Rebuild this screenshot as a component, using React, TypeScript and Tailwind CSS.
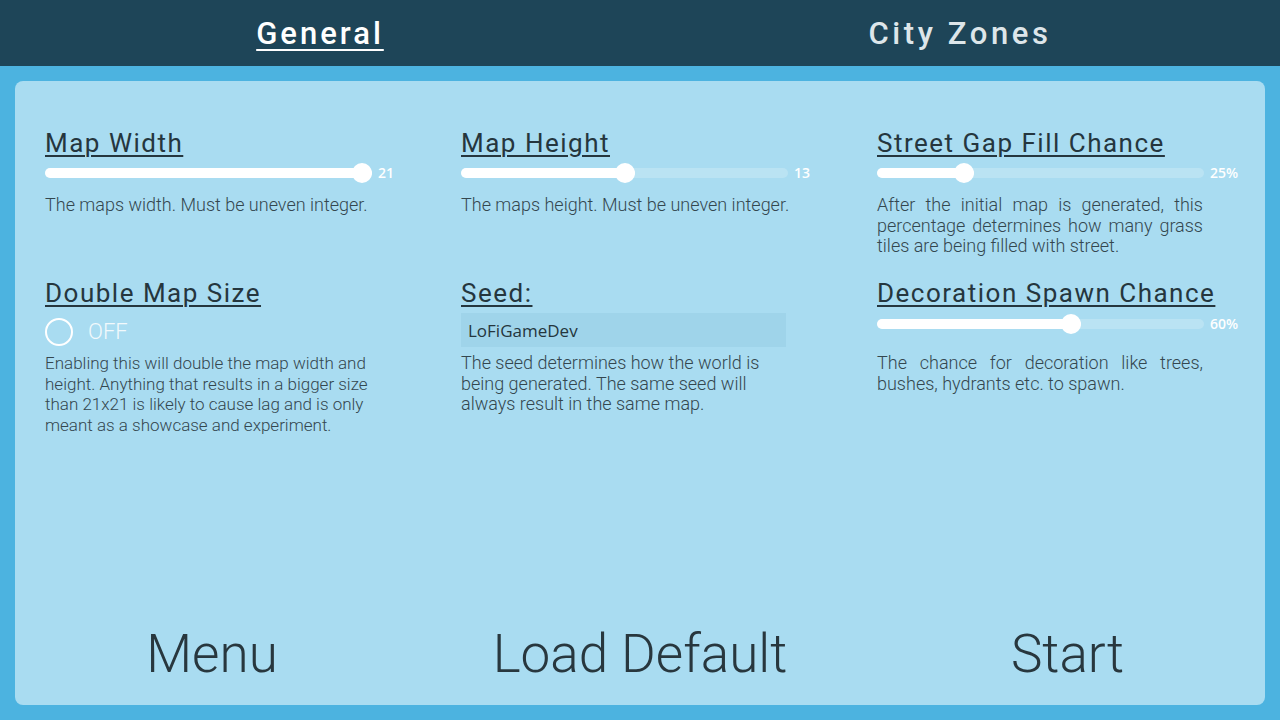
import { useState } from "react";

interface SliderProps {
   value: number;
   min: number;
   max: number;
   label: string;
}

function Slider ({ value, min, max, label }: SliderProps) {
   const pct = (value - min) / (max - min);
   return (
      <div className="flex items-center h-5 gap-[6px]">
         <div className="relative w-[327px] h-5">
            <div className="absolute left-0 right-0 top-[5px] h-[10px] rounded-full bg-white/20" />
            <div
               className="absolute left-0 top-[5px] h-[10px] rounded-full bg-white"
               style={{ width: `calc(${pct} * (100% - 20px) + 20px)` }}
            />
            <div
               className="absolute top-0 w-5 h-5 rounded-full bg-white"
               style={{ left: `calc(${pct} * (100% - 20px))` }}
            />
         </div>
         <span className="font-['Open_Sans',sans-serif] font-semibold text-[14px] text-white leading-none">{label}</span>
      </div>
   );
}

function Heading ({ children }: { children: React.ReactNode }) {
   return (
      <h2 className="text-[26px] leading-[30px] tracking-[1.5px] underline underline-offset-[3px] decoration-[1.5px] text-[#25363e]">
         {children}
      </h2>
   );
}

function Desc ({ children, justify = false, small = false }: { children: React.ReactNode; justify?: boolean; small?: boolean }) {
   return (
      <p className={`font-light leading-[20.5px] text-[#34474f] ${small ? "text-[17px]" : "text-[18px]"} ${justify ? "w-[326px] text-justify" : "w-[334px]"}`}>
         {children}
      </p>
   );
}

export default function App () {
   const [doubleSize, setDoubleSize] = useState(false);
   const [seed, setSeed] = useState("LoFiGameDev");

   return (
      <div className="w-[1280px] h-[720px] bg-[#4cb3e0] flex flex-col font-[Roboto,sans-serif] overflow-hidden">
         {/* Tabs */}
         <div className="h-[66px] bg-[#1e4558] grid grid-cols-2 items-center text-center shrink-0">
            <span className="text-[31px] leading-none font-medium tracking-[3px] text-white underline decoration-2 underline-offset-[5px]">General</span>
            <span className="text-[31px] leading-none font-medium tracking-[3.6px] text-[#dde6ea]">City Zones</span>
         </div>

         {/* Settings panel */}
         <div className="mx-[15px] mt-[15px] h-[624px] rounded-lg bg-[#a9dcf1] flex flex-col">
            <div className="pt-[47px] pl-[30px] grid grid-cols-[416px_416px_1fr] grid-rows-[150px_auto]">
               <div>
                  <Heading>Map Width</Heading>
                  <div className="mt-[5px]"><Slider value={21} min={5} max={21} label="21" /></div>
                  <div className="mt-[12px]"><Desc>The maps width. Must be uneven integer.</Desc></div>
               </div>
               <div>
                  <Heading>Map Height</Heading>
                  <div className="mt-[5px]"><Slider value={13} min={5} max={21} label="13" /></div>
                  <div className="mt-[12px]"><Desc>The maps height. Must be uneven integer.</Desc></div>
               </div>
               <div>
                  <Heading>Street Gap Fill Chance</Heading>
                  <div className="mt-[5px]"><Slider value={25} min={0} max={100} label="25%" /></div>
                  <div className="mt-[12px]">
                     <Desc justify>After the initial map is generated, this percentage determines how many grass tiles are being filled with street.</Desc>
                  </div>
               </div>

               <div>
                  <Heading>Double Map Size</Heading>
                  <button
                     onClick={() => setDoubleSize(!doubleSize)}
                     className="mt-[10px] h-[27px] flex items-center gap-[15px] cursor-pointer"
                  >
                     <span className={`w-[28px] h-[28px] rounded-full border-2 border-white ${doubleSize ? "bg-white" : ""}`} />
                     <span className="font-light text-[22px] leading-none text-[#f2f9fc]">{doubleSize ? "ON" : "OFF"}</span>
                  </button>
                  <div className="mt-[8px]">
                     <Desc small>Enabling this will double the map width and height. Anything that results in a bigger size than 21x21 is likely to cause lag and is only meant as a showcase and experiment.</Desc>
                  </div>
               </div>
               <div>
                  <Heading>Seed:</Heading>
                  <input
                     value={seed}
                     onChange={(e) => setSeed(e.target.value)}
                     className="mt-[5px] w-[325px] h-[34px] px-[7px] bg-[#9fd4ea] outline-none font-['Open_Sans',sans-serif] text-[17px] text-[#25363e]"
                  />
                  <div className="mt-[6px]">
                     <Desc>The seed determines how the world is being generated. The same seed will always result in the same map.</Desc>
                  </div>
               </div>
               <div>
                  <Heading>Decoration Spawn Chance</Heading>
                  <div className="mt-[6px]"><Slider value={60} min={0} max={100} label="60%" /></div>
                  <div className="mt-[19px]">
                     <Desc justify>The chance for decoration like trees, bushes, hydrants etc. to spawn.</Desc>
                  </div>
               </div>
            </div>

            {/* Bottom actions */}
            <div className="mt-auto pb-[24px] grid grid-cols-[394px_462px_393px] text-center font-light text-[53px] leading-[53px] text-[#28373e]">
               <button className="cursor-pointer">Menu</button>
               <button className="cursor-pointer">Load Default</button>
               <button className="cursor-pointer">Start</button>
            </div>
         </div>
      </div>
   );
}
